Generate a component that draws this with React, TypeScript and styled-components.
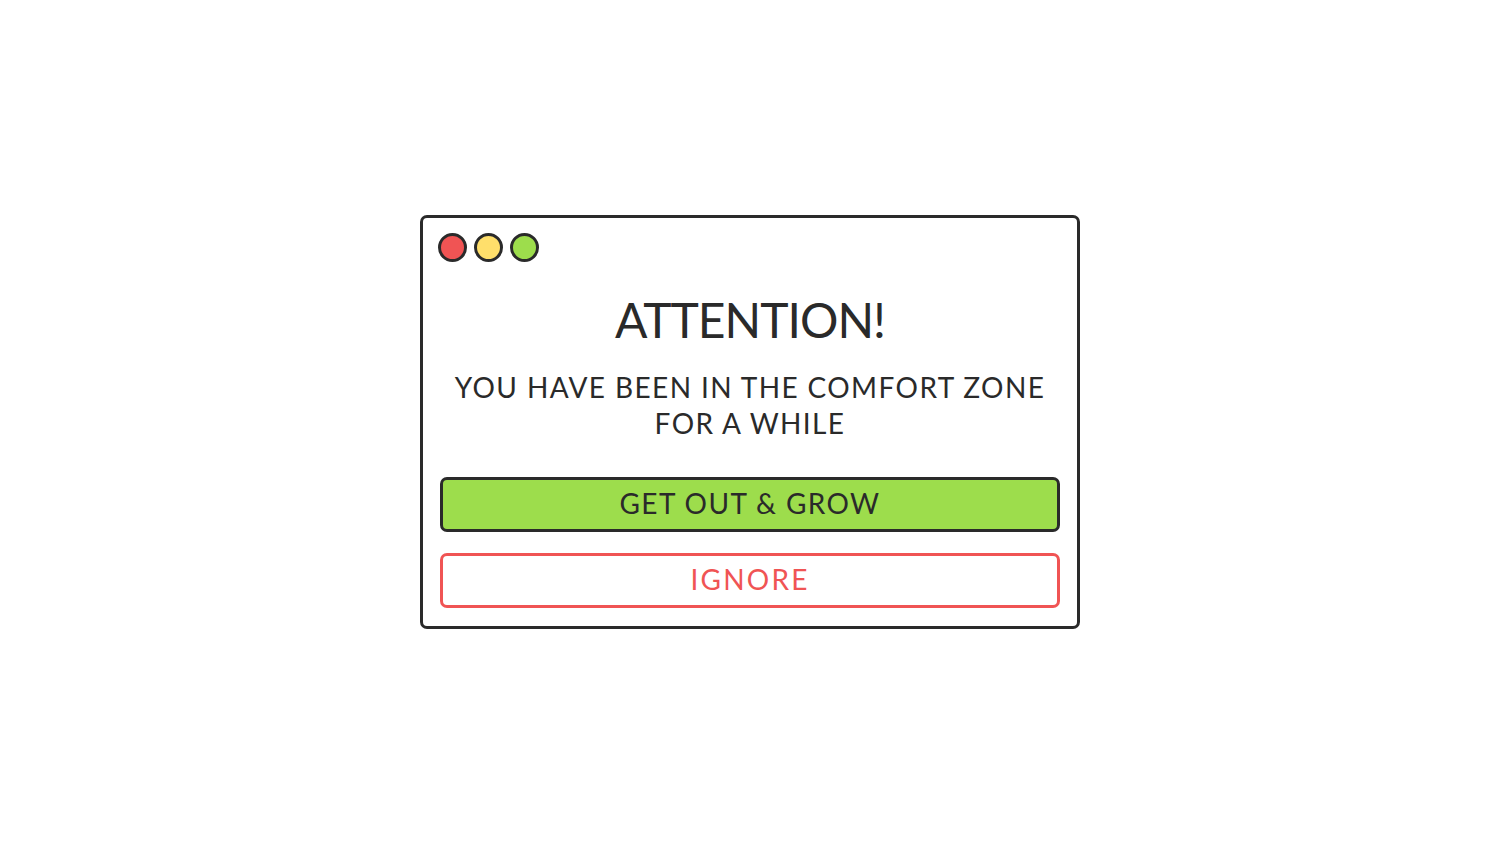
import React from "react";
import styled, { createGlobalStyle } from "styled-components";

const Global = createGlobalStyle`
  html, body { margin: 0; padding: 0; background: #ffffff; }
  body { font-family: "Lato", "Open Sans", sans-serif; }
`;

const Page = styled.div`
  min-height: 100vh;
  display: flex;
  align-items: center;
  justify-content: center;
`;

const Window = styled.div`
  width: 660px;
  box-sizing: border-box;
  border: 3px solid #2a2a2a;
  border-radius: 7px;
  background: #fff;
  padding: 15px 17px 18px 17px;
  display: flex;
  flex-direction: column;
`;

const Dots = styled.div`
  display: flex;
  gap: 7px;
  margin-left: -2px;
`;

const Dot = styled.span<{ $c: string }>`
  width: 29px;
  height: 29px;
  box-sizing: border-box;
  border-radius: 50%;
  border: 3px solid #2a2a2a;
  background: ${(p) => p.$c};
`;

const Title = styled.h1`
  margin: 30px 0 0 0;
  font-size: 48px;
  line-height: 56px;
  font-weight: 400;
  letter-spacing: -1px;
  color: #2a2a2a;
  text-align: center;
`;

const Message = styled.p`
  margin: 21px 0 0 0;
  font-size: 28px;
  line-height: 36px;
  letter-spacing: 1.4px;
  color: #2a2a2a;
  text-align: center;
`;

const Actions = styled.div`
  margin-top: 36px;
  display: flex;
  flex-direction: column;
  gap: 21px;
`;

const Button = styled.button<{ $variant: "primary" | "danger" }>`
  height: 55px;
  box-sizing: border-box;
  border-radius: 7px;
  border: 3px solid ${(p) => (p.$variant === "primary" ? "#2a2a2a" : "#f05454")};
  background: ${(p) => (p.$variant === "primary" ? "#9ddd4c" : "#ffffff")};
  color: ${(p) => (p.$variant === "primary" ? "#2a2a2a" : "#f05454")};
  font-family: inherit;
  font-size: 28px;
  letter-spacing: ${(p) => (p.$variant === "primary" ? "1.4px" : "2.2px")};
  padding: 0 0 4px 0;
  cursor: pointer;
`;

export default function App() {
  return (
    <>
      <Global />
      <Page>
        <Window>
          <Dots>
            <Dot $c="#f05454" />
            <Dot $c="#ffdf6b" />
            <Dot $c="#9ddd4c" />
          </Dots>
          <Title>ATTENTION!</Title>
          <Message>
            YOU HAVE BEEN IN THE COMFORT ZONE
            <br />
            FOR A WHILE
          </Message>
          <Actions>
            <Button $variant="primary">GET OUT &amp; GROW</Button>
            <Button $variant="danger">IGNORE</Button>
          </Actions>
        </Window>
      </Page>
    </>
  );
}
